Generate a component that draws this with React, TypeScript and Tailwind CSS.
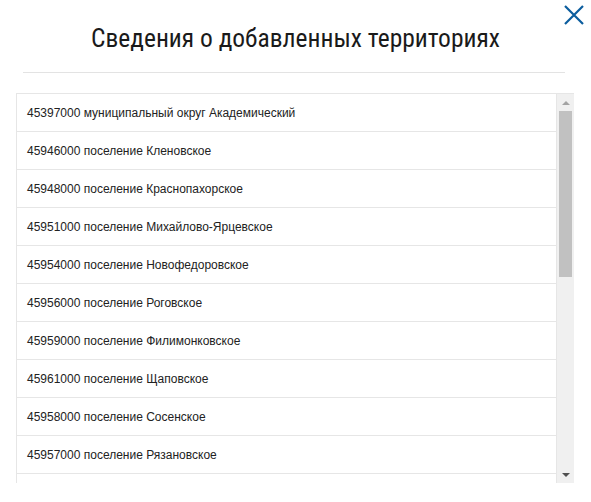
const territories = [
  '45397000 муниципальный округ Академический',
  '45946000 поселение Кленовское',
  '45948000 поселение Краснопахорское',
  '45951000 поселение Михайлово-Ярцевское',
  '45954000 поселение Новофедоровское',
  '45956000 поселение Роговское',
  '45959000 поселение Филимонковское',
  '45961000 поселение Щаповское',
  '45958000 поселение Сосенское',
  '45957000 поселение Рязановское',
];

function CloseIcon() {
  return (
    <svg width="22" height="22" viewBox="0 0 22 22" className="block">
      <path d="M2 2 L20 20 M20 2 L2 20" stroke="#0b5d9e" strokeWidth="2.2" fill="none" />
    </svg>
  );
}

function Scrollbar() {
  return (
    <div className="flex w-[17px] shrink-0 flex-col items-center bg-[#f0f0f0]">
      <div className="flex h-[17px] w-full items-center justify-center">
        <div className="h-0 w-0 border-x-[4px] border-b-[4px] border-x-transparent border-b-[#a3a3a3]" />
      </div>
      <div className="h-[166px] w-[13px] bg-[#c1c1c1]" />
      <div className="flex-1" />
      <div className="flex h-[17px] w-full items-center justify-center">
        <div className="h-0 w-0 border-x-[4px] border-t-[4px] border-x-transparent border-t-[#505050]" />
      </div>
    </div>
  );
}

export default function App() {
  return (
    <div className="relative h-[502px] w-[591px] overflow-hidden bg-white font-['Roboto','Liberation_Sans',sans-serif]">
      <button className="absolute right-[6px] top-[4px]">
        <CloseIcon />
      </button>

      <h1 className="pt-[22px] text-center font-['Roboto_Condensed','Liberation_Sans_Narrow','Roboto',sans-serif] text-[25.5px] font-normal leading-[32px] text-[#1a1a1a] [font-stretch:condensed]">
        Сведения о добавленных территориях
      </h1>

      <div className="ml-[23px] mr-[26px] mt-[18px] h-px bg-[#e3e3e3]" />

      <div className="ml-[16px] mr-[17px] mt-[20px] flex h-[390px] border-l border-t border-[#e6e6e6]">
        <div className="flex-1 overflow-hidden border-r border-[#e6e6e6]">
          {territories.map((t) => (
            <div
              key={t}
              className="flex h-[38px] items-center border-b border-[#e6e6e6] pl-[10px] font-['Liberation_Sans',sans-serif] text-[12px] text-[#222]"
            >
              {t}
            </div>
          ))}
          <div className="h-[38px] border-b border-[#e6e6e6]" />
        </div>
        <Scrollbar />
      </div>
    </div>
  );
}
